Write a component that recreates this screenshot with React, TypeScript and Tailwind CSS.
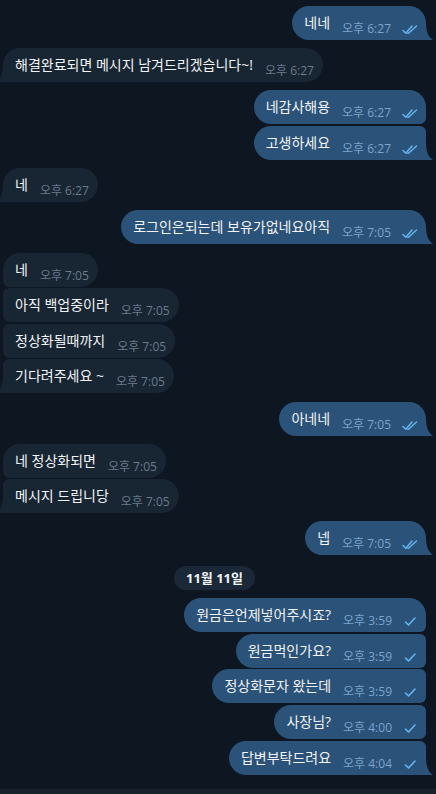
import React from "react";

type Msg = { text: string; time: string };
type Group = { out: boolean; checks?: 1 | 2; msgs: Msg[] } | { date: string };

const groups: Group[] = [
  { out: true, checks: 2, msgs: [{ text: "네네", time: "오후 6:27" }] },
  { out: false, msgs: [{ text: "해결완료되면 메시지 남겨드리겠습니다~!", time: "오후 6:27" }] },
  {
    out: true,
    checks: 2,
    msgs: [
      { text: "네감사해용", time: "오후 6:27" },
      { text: "고생하세요", time: "오후 6:27" },
    ],
  },
  { out: false, msgs: [{ text: "네", time: "오후 6:27" }] },
  { out: true, checks: 2, msgs: [{ text: "로그인은되는데 보유가없네요아직", time: "오후 7:05" }] },
  {
    out: false,
    msgs: [
      { text: "네", time: "오후 7:05" },
      { text: "아직 백업중이라", time: "오후 7:05" },
      { text: "정상화될때까지", time: "오후 7:05" },
      { text: "기다려주세요 ~", time: "오후 7:05" },
    ],
  },
  { out: true, checks: 2, msgs: [{ text: "아네네", time: "오후 7:05" }] },
  {
    out: false,
    msgs: [
      { text: "네 정상화되면", time: "오후 7:05" },
      { text: "메시지 드립니당", time: "오후 7:05" },
    ],
  },
  { out: true, checks: 2, msgs: [{ text: "넵", time: "오후 7:05" }] },
  { date: "11월 11일" },
  {
    out: true,
    checks: 1,
    msgs: [
      { text: "원금은언제넣어주시죠?", time: "오후 3:59" },
      { text: "원금먹인가요?", time: "오후 3:59" },
      { text: "정상화문자 왔는데", time: "오후 3:59" },
      { text: "사장님?", time: "오후 4:00" },
      { text: "답변부탁드려요", time: "오후 4:04" },
    ],
  },
];

const FONT = { fontFamily: '"Open Sans", "Noto Sans CJK KR", sans-serif' };

function Checks({ n }: { n: 1 | 2 }) {
  if (n === 1) {
    return (
      <svg width="15" height="11" viewBox="0 0 15 11" className="ml-[11px] mb-[2px]">
        <path d="M2.5 6 L5.5 9 L12 2" fill="none" stroke="#64b5ef" strokeWidth="1.6" strokeLinecap="round" strokeLinejoin="round" />
      </svg>
    );
  }
  return (
    <svg width="16" height="11" viewBox="0 0 16 11" className="ml-[11px] mb-[2px]">
      <path d="M1 6.5 L3.8 9.2 L10 2" fill="none" stroke="#64b5ef" strokeWidth="1.5" strokeLinecap="round" strokeLinejoin="round" />
      <path d="M5.8 9.2 L6.5 9.2 L14.5 2" fill="none" stroke="#64b5ef" strokeWidth="1.5" strokeLinecap="round" strokeLinejoin="round" />
    </svg>
  );
}

function Bubble({ out, msg, first, last, checks }: { out: boolean; msg: Msg; first: boolean; last: boolean; checks?: 1 | 2 }) {
  let radius = "rounded-[17px]";
  if (out) {
    if (first && last) radius = "rounded-[17px] rounded-br-none";
    else if (first) radius = "rounded-[17px] rounded-br-[6px]";
    else if (last) radius = "rounded-[17px] rounded-tr-[6px] rounded-br-none";
    else radius = "rounded-[17px] rounded-tr-[6px] rounded-br-[6px]";
  } else {
    if (first && last) radius = "rounded-[17px] rounded-bl-none";
    else if (first) radius = "rounded-[17px] rounded-bl-[6px]";
    else if (last) radius = "rounded-[17px] rounded-tl-[6px] rounded-bl-none";
    else radius = "rounded-[17px] rounded-tl-[6px] rounded-bl-[6px]";
  }
  const bg = out ? "bg-[#2b5278]" : "bg-[#182533]";
  return (
    <div className={`relative flex items-end h-[34px] pl-[12px] ${out ? "pr-[8px]" : "pr-[9px]"} ${bg} ${radius}`}>
      <span className="text-[14px] leading-[20px] text-[#f2f4f6] mb-[7px] whitespace-nowrap">{msg.text}</span>
      <span className={`ml-[12px] mb-[3px] text-[12px] leading-[16px] whitespace-nowrap flex items-end ${out ? "text-[#7ba5cd]" : "text-[#6b7b8b]"}`}>
        {msg.time}
        {out && checks ? <Checks n={checks} /> : null}
      </span>
      {last && out && (
        <svg width="7" height="16" viewBox="0 0 7 16" className="absolute left-full bottom-0">
          <path d="M0 0 C0.5 8 2.5 13 7 16 L0 16 Z" fill="#2b5278" />
        </svg>
      )}
      {last && !out && (
        <svg width="7" height="16" viewBox="0 0 7 16" className="absolute right-full bottom-0">
          <path d="M7 0 C6.5 8 4.5 13 0 16 L7 16 Z" fill="#182533" />
        </svg>
      )}
    </div>
  );
}

export default function App() {
  return (
    <div className="w-[436px] h-[794px] bg-[#0e1621] overflow-hidden flex flex-col" style={FONT}>
      <div className="flex-1 flex flex-col pt-[6px]">
        {groups.map((g, gi) => {
          if ("date" in g) {
            return (
              <div key={gi} className="flex justify-center pr-[7px] mt-[11px] -mb-[0.5px]">
                <div className="h-[24px] px-[12px] rounded-full bg-[#1b2837] flex items-center text-[13px] font-bold text-[#f2f4f6]">
                  {g.date}
                </div>
              </div>
            );
          }
          return (
            <div
              key={gi}
              className={`flex flex-col gap-[1.6px] ${g.out ? "items-end pr-[10px]" : "items-start pl-[3px]"} ${gi === 0 ? "" : "mt-[8.2px]"}`}
            >
              {g.msgs.map((m, i) => (
                <Bubble key={i} out={g.out} msg={m} first={i === 0} last={i === g.msgs.length - 1} checks={g.checks} />
              ))}
            </div>
          );
        })}
      </div>
      <div className="h-[5px] bg-[#17212b]" />
    </div>
  );
}
